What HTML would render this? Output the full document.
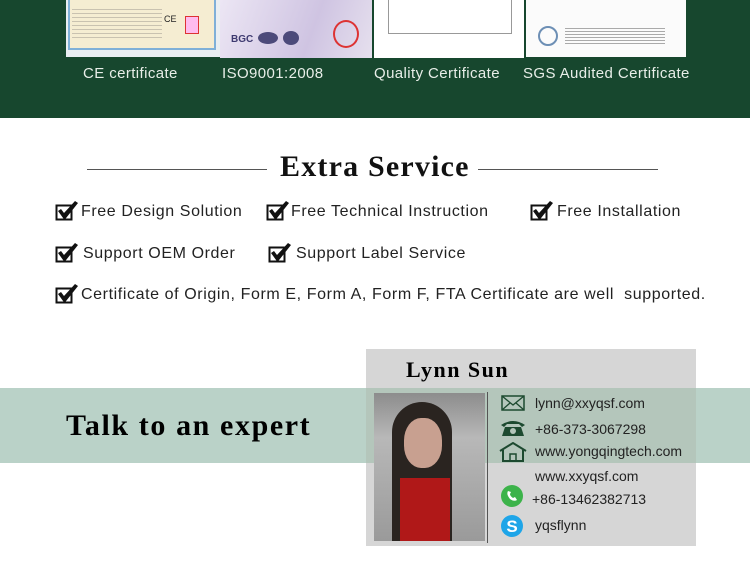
<!DOCTYPE html>
<html><head><meta charset="utf-8"><style>
*{margin:0;padding:0;box-sizing:border-box}
body{width:750px;height:574px;background:#fff;position:relative;overflow:hidden;font-family:"Liberation Sans",sans-serif}
.a{position:absolute}
.top{left:0;top:0;width:750px;height:118px;background:#17472e}
.lbl{color:#e8eee8;font-size:15px;top:65px;letter-spacing:.4px}
.chk{position:absolute;font-size:16px;color:#222;letter-spacing:.6px;white-space:nowrap}
.chk svg{position:absolute;left:0;top:-3px}
.chk span{position:absolute;left:26px;top:0}
.ct{font-size:14px;color:#222;white-space:nowrap}
</style></head><body>
<div class="a top"></div>
<div class="a" style="left:66px;top:0;width:154px;height:57px;background:#e9eef2"></div>
<div class="a" style="left:68px;top:0;width:148px;height:50px;background:#f5edd2;border:2px solid #7fb0d8;border-top:none"></div>
<div class="a" style="left:72px;top:6px;width:90px;height:32px;background:repeating-linear-gradient(#f5edd2 0 3px,#c9c2b0 3px 4px)"></div>
<div class="a" style="left:164px;top:14px;width:12px;height:10px;font-size:9px;color:#222">CE</div>
<div class="a" style="left:185px;top:16px;width:14px;height:18px;border:1px solid #d33;background:#fbe"></div>
<div class="a" style="left:220px;top:0;width:152px;height:58px;background:linear-gradient(110deg,#ece6f4,#cfc4e2 60%,#e6e0ee)"></div>
<div class="a" style="left:231px;top:34px;font-size:10px;font-weight:bold;color:#3e3a70">BGC</div>
<div class="a" style="left:258px;top:32px;width:20px;height:12px;border-radius:50%;background:#4c4a7a"></div>
<div class="a" style="left:283px;top:31px;width:16px;height:14px;border-radius:50%;background:#4c4a7a"></div>
<div class="a" style="left:333px;top:20px;width:26px;height:28px;border-radius:50%;border:2px solid #d33"></div>
<div class="a" style="left:374px;top:0;width:150px;height:58px;background:#fff"></div>
<div class="a" style="left:388px;top:0;width:124px;height:34px;border:1px solid #999;border-top:none"></div>
<div class="a" style="left:526px;top:0;width:160px;height:57px;background:#fbfbfb"></div>
<div class="a" style="left:538px;top:26px;width:20px;height:20px;border-radius:50%;border:2px solid #6d8fb5"></div>
<div class="a" style="left:565px;top:26px;width:100px;height:20px;background:repeating-linear-gradient(#fbfbfb 0 2px,#aaa 2px 3px)"></div>
<div class="a lbl" style="left:83px">CE certificate</div>
<div class="a lbl" style="left:222px">ISO9001:2008</div>
<div class="a lbl" style="left:374px">Quality Certificate</div>
<div class="a lbl" style="left:523px">SGS Audited Certificate</div>
<div class="a" style="left:87px;top:169px;width:180px;height:1px;background:#555"></div>
<div class="a" style="left:478px;top:169px;width:180px;height:1px;background:#555"></div>
<div class="a" style="left:280px;top:150px;font-family:'Liberation Serif',serif;font-weight:bold;font-size:30px;color:#111;letter-spacing:1.2px">Extra Service</div>
<svg width="0" height="0" style="position:absolute"><defs><g id="ck"><rect x="1.5" y="5.5" width="15" height="14" fill="none" stroke="#111" stroke-width="2"/><path d="M3 11 L6 9 L9 13 L20 1 L23 3 L9.5 20 Z" fill="#111"/></g></defs></svg>
<div class="chk" style="left:55px;top:203px"><svg width="24" height="22"><use href="#ck"/></svg><span>Free Design Solution</span></div>
<div class="chk" style="left:266px;top:203px"><svg width="24" height="22"><use href="#ck"/></svg><span style="left:25px">Free Technical Instruction</span></div>
<div class="chk" style="left:530px;top:203px"><svg width="24" height="22"><use href="#ck"/></svg><span style="left:27px">Free Installation</span></div>
<div class="chk" style="left:55px;top:245px"><svg width="24" height="22"><use href="#ck"/></svg><span style="left:28px">Support OEM Order</span></div>
<div class="chk" style="left:268px;top:245px"><svg width="24" height="22"><use href="#ck"/></svg><span style="left:28px">Support Label Service</span></div>
<div class="chk" style="left:55px;top:286px"><svg width="24" height="22"><use href="#ck"/></svg><span style="left:26px">Certificate of Origin, Form E, Form A, Form F, FTA Certificate are well&nbsp; supported.</span></div>
<div class="a" style="left:0;top:388px;width:750px;height:75px;background:#bad2c8"></div>
<div class="a" style="left:66px;top:409px;font-family:'Liberation Serif',serif;font-weight:bold;font-size:30px;color:#000;letter-spacing:1.6px">Talk to an expert</div>
<div class="a" style="left:366px;top:349px;width:330px;height:197px;background:#d6d6d6"></div>
<div class="a" style="left:366px;top:388px;width:330px;height:75px;background:#b4c6bb"></div>
<div class="a" style="left:406px;top:357px;font-family:'Liberation Serif',serif;font-weight:bold;font-size:22px;color:#000;letter-spacing:1.5px">Lynn Sun</div>
<div class="a" style="left:374px;top:393px;width:111px;height:148px;background:linear-gradient(180deg,#8c8c8c,#b8b8b8 30%,#9a9a9a)"></div>
<div class="a" style="left:392px;top:402px;width:60px;height:139px;border-radius:30px 30px 0 0;background:#2a2420"></div>
<div class="a" style="left:404px;top:418px;width:38px;height:50px;border-radius:45%;background:#c8a090"></div>
<div class="a" style="left:400px;top:478px;width:50px;height:63px;background:#b01818"></div>
<div class="a" style="left:487px;top:392px;width:1px;height:151px;background:#555"></div>
<svg class="a" style="left:501px;top:395px" width="24" height="16"><rect x="1" y="1" width="22" height="14" fill="none" stroke="#1d4a30" stroke-width="1.5"/><path d="M1 1 L12 10 L23 1 M1 15 L9 8 M23 15 L15 8" fill="none" stroke="#1d4a30" stroke-width="1.3"/></svg>
<svg class="a" style="left:500px;top:419px" width="26" height="18"><path d="M1 6 Q13 -2 25 6 L22 8 L19 5 L7 5 L4 8Z M5 8 L21 8 L24 17 L2 17Z" fill="#1d4a30"/><circle cx="13" cy="12" r="3" fill="#b4c6bb"/></svg>
<svg class="a" style="left:499px;top:442px" width="28" height="20"><path d="M1 9 L14 1 L27 9 M4 8 L4 19 L24 19 L24 8" fill="none" stroke="#1d4a30" stroke-width="2"/><rect x="11" y="12" width="6" height="7" fill="none" stroke="#1d4a30" stroke-width="1.5"/></svg>
<svg class="a" style="left:500px;top:484px" width="24" height="24"><circle cx="12" cy="12" r="11" fill="#3cb34a"/><path d="M8 7 Q6 10 10 15 Q14 18 17 16 L15 13 L13 14 Q10 12 10 10 L11 8Z" fill="#fff"/></svg>
<svg class="a" style="left:500px;top:514px" width="24" height="24"><circle cx="12" cy="12" r="11" fill="#1ea5e8"/><text x="12" y="18" font-size="17" font-weight="bold" fill="#fff" text-anchor="middle" font-family="Liberation Sans">S</text></svg>
<div class="a ct" style="left:535px;top:395px">lynn@xxyqsf.com</div>
<div class="a ct" style="left:535px;top:421px">+86-373-3067298</div>
<div class="a ct" style="left:535px;top:443px">www.yongqingtech.com</div>
<div class="a ct" style="left:535px;top:468px">www.xxyqsf.com</div>
<div class="a ct" style="left:532px;top:491px">+86-13462382713</div>
<div class="a ct" style="left:535px;top:517px">yqsflynn</div>
</body></html>
